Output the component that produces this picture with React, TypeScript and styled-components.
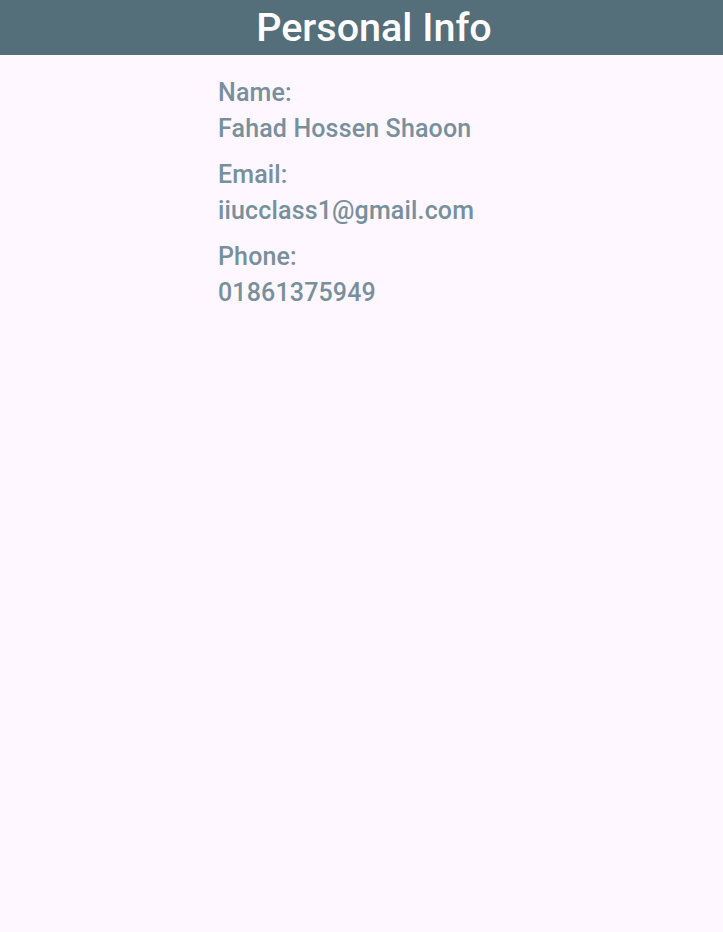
import styled, { createGlobalStyle } from "styled-components"

const Global = createGlobalStyle`
body {
  margin: 0;
  background: #fef7ff;
  font-family: Roboto, "Noto Sans", sans-serif;
}
`

const Page = styled.div`
min-height: 932px;
background: #fef7ff;
`

const Header = styled.header`
height: 55px;
background-color: #546e7a;
display: flex;
align-items: center;
justify-content: center;
padding-left: 25px;
`

const Title = styled.h1`
margin: 0;
color: #ffffff;
font-size: 39.5px;
font-weight: 500;
line-height: 55px;
`

const Details = styled.div`
display: flex;
flex-direction: column;
gap: 10px;
padding: 20px 0 0 218px;
`

const Field = styled.div`
display: flex;
flex-direction: column;
`

const Line = styled.span`
color: #78909c;
font-size: 25px;
font-weight: 500;
letter-spacing: 0.15px;
line-height: 36px;
`

const info = [
    { label: "Name:", value: "Fahad Hossen Shaoon" },
    { label: "Email:", value: "iiucclass1@gmail.com" },
    { label: "Phone:", value: "01861375949" },
]

export default function App() {
    return <Page>
        <Global />
        <Header>
            <Title>Personal Info</Title>
        </Header>
        <Details>
            {info.map(i => (
                <Field key={i.label}>
                    <Line>{i.label}</Line>
                    <Line>{i.value}</Line>
                </Field>
            ))}
        </Details>
    </Page>
}
